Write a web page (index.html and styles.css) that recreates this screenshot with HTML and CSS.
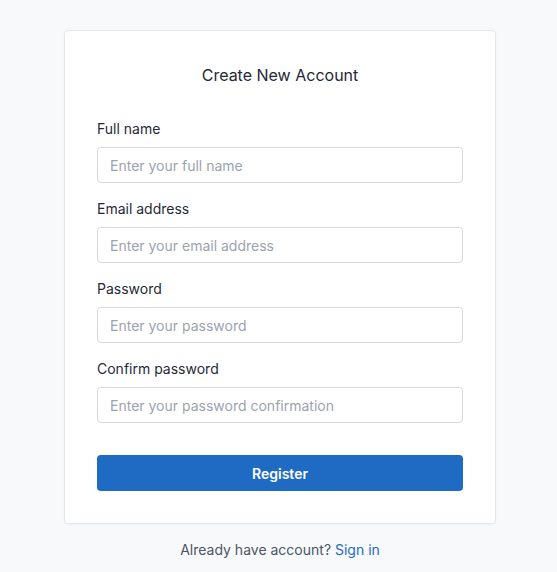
FILE: index.html
```html
<!DOCTYPE html>
<html lang="en">
<head>
<meta charset="utf-8">
<title>Create New Account</title>
<link rel="stylesheet" href="styles.css">
</head>
<body>
<main class="page">
  <section class="card">
    <h1 class="title">Create New Account</h1>
    <form class="form">
      <div class="field">
        <label class="label" for="name">Full name</label>
        <input class="input" id="name" type="text" placeholder="Enter your full name">
      </div>
      <div class="field">
        <label class="label" for="email">Email address</label>
        <input class="input" id="email" type="email" placeholder="Enter your email address">
      </div>
      <div class="field">
        <label class="label" for="pw">Password</label>
        <input class="input" id="pw" type="password" placeholder="Enter your password">
      </div>
      <div class="field">
        <label class="label" for="pw2">Confirm password</label>
        <input class="input" id="pw2" type="password" placeholder="Enter your password confirmation">
      </div>
      <button class="button" type="button">Register</button>
    </form>
  </section>
  <p class="footer">Already have account? <a class="link" href="#">Sign in</a></p>
</main>
</body>
</html>
```
FILE: styles.css
```css
* { box-sizing: border-box; }
html, body { margin: 0; padding: 0; }
body {
  background: #f8f9fb;
  font-family: Inter, "Liberation Sans", sans-serif;
  color: #1f2937;
  font-size: 14px;
  line-height: 20px;
}
.page {
  display: flex;
  flex-direction: column;
  align-items: center;
  padding: 30px 0 0 3px;
}
.card {
  width: 432px;
  background: #fff;
  border: 1px solid #e5e7eb;
  border-radius: 4px;
  padding: 32px 32px 32px;
  box-shadow: 0 1px 2px rgba(0, 0, 0, 0.04);
}
.title {
  margin: 0 0 32px;
  text-align: center;
  font-size: 16px;
  line-height: 24px;
  font-weight: 400;
  color: #1f2937;
}
.form {
  display: flex;
  flex-direction: column;
}
.field {
  display: flex;
  flex-direction: column;
  margin-bottom: 16px;
}
.field:last-of-type { margin-bottom: 32px; }
.label {
  font-size: 14px;
  line-height: 20px;
  margin-bottom: 8px;
  color: #1f2937;
}
.input {
  height: 36px;
  border: 1px solid #d6d9de;
  border-radius: 4px;
  padding: 0 12px;
  font-family: inherit;
  font-size: 14px;
  color: #1f2937;
  background: #fff;
  outline: none;
}
.input::placeholder { color: #9ca3af; }
.button {
  height: 36px;
  border: none;
  border-radius: 4px;
  background: #1f6bc4;
  color: #fff;
  font-family: inherit;
  font-size: 14px;
  font-weight: 600;
  cursor: pointer;
}
.footer {
  margin: 16px 0 0;
  font-size: 14px;
  line-height: 20px;
  color: #4b5563;
}
.link {
  color: #1f6bc4;
  text-decoration: none;
}
```
